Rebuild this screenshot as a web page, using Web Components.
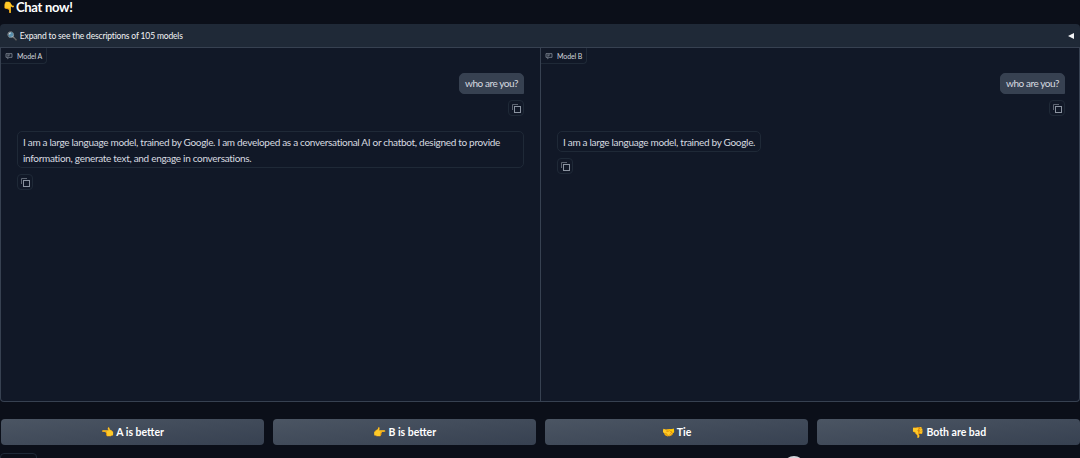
<!DOCTYPE html>
<html>
<head>
<meta charset="utf-8">
<style>
html, body { margin: 0; height: 458px; overflow: hidden; background: #0b0f19; }
body { font-family: "Lato", "Noto Sans", sans-serif; color: #f3f4f6; }
</style>
</head>
<body>
<template id="arenaPageTpl">
<style>
:host { display: flex; flex-direction: column; height: 458px; overflow: hidden; }
#title { height: 24px; font-size: 13px; font-weight: 700; line-height: 14px; letter-spacing: -.3px; display: flex; align-items: flex-start; color: #fff; }
#panels { display: flex; height: 354px; border: 1px solid #374151; border-top: 0; border-radius: 0 0 4px 4px; box-sizing: border-box; background: #111827; }
#votes { display: flex; gap: 9px; margin-top: 17px; padding-left: 1px; }
#foot { position: relative; flex: 1; }
#foot .box { position: absolute; left: 0; top: 8px; width: 37px; height: 20px; border: 1px solid #1f2937; border-radius: 4px; box-sizing: border-box; }
#foot .dot { position: absolute; left: 783px; top: 11px; width: 22px; height: 22px; border-radius: 50%; background: #d1d5db; }
</style>
<div id="title"><slot name="title"></slot></div>
<slot name="accordion"></slot>
<div id="panels"><slot name="panels"></slot></div>
<div id="votes"><slot name="votes"></slot></div>
<div id="foot"><div class="box"></div><div class="dot"></div></div>
</template>

<template id="modelAccordionTpl">
<style>
:host { display: flex; align-items: center; justify-content: space-between; height: 24px; box-sizing: border-box; background: #1f2937; border-bottom: 1px solid #374151; border-radius: 4px 4px 0 0; padding: 0 6px 0 7px; font-size: 8.5px; letter-spacing: -.16px; color: #f3f4f6; }
#arrow { width: 0; height: 0; border-top: 3.5px solid transparent; border-bottom: 3.5px solid transparent; border-right: 6px solid #f3f4f6; }
</style>
<div id="label"><slot></slot></div>
<div id="arrow"></div>
</template>

<template id="chatPanelTpl">
<style>
:host { display: block; flex: 0 0 50%; min-width: 0; position: relative; box-sizing: border-box; padding: 25px 16px 0 16px; }
:host([second]) { border-left: 1px solid #374151; padding-right: 14px; }
#badge { position: absolute; left: 0; top: 0; height: 15px; display: flex; align-items: center; gap: 4px; padding: 0 4px 0 4px; font-size: 7px; letter-spacing: -.1px; color: #d1d5db; border-right: 1px solid #1f2937; border-bottom: 1px solid #1f2937; border-radius: 0 0 4px 0; }
</style>
<div id="badge"><svg width="8" height="8" viewBox="0 0 24 24" fill="none" stroke="#9ca3af" stroke-width="2"><path d="M3 5h18v11h-9l-4 4v-4H3z"/><path d="M7 9h8M7 12h5"/></svg><span id="name"></span></div>
<slot></slot>
</template>

<template id="chatMessageTpl">
<style>
:host { display: flex; flex-direction: column; align-items: flex-start; margin-bottom: 15px; }
:host([user]) { align-items: flex-end; }
#bubble { box-sizing: border-box; font-size: 10px; letter-spacing: -.3px; line-height: 16px; color: #d8dbe0; padding: 2px 5px 1px 5px; border: 1px solid #1f2937; border-radius: 5px; max-width: 100%; }
:host([user]) #bubble { background: #374151; border-color: #374151; border-radius: 5px 5px 0 5px; padding: 1px 5px; height: 21px; letter-spacing: -.45px; }
#copy { width: 16px; height: 16px; margin-top: 6px; box-sizing: border-box; border: 1px solid #1f2937; border-radius: 4px; display: flex; align-items: center; justify-content: center; }
</style>
<div id="bubble"><slot></slot></div>
<div id="copy"><svg width="9" height="9" viewBox="0 0 9 9" fill="none"><rect x="2.5" y="2.5" width="6" height="6" stroke="#8b93a0"/><path d="M6 .5H.5V6" stroke="#5f6673"/></svg></div>
</template>

<template id="voteButtonTpl">
<style>
:host { display: block; flex: 1; height: 26px; }
button { all: unset; box-sizing: border-box; width: 100%; height: 100%; display: flex; align-items: center; justify-content: center; gap: 2px; border-radius: 4px; background: linear-gradient(to bottom right, #4b5563, #374151); font-family: "Lato", "Noto Sans", sans-serif; font-size: 10.5px; font-weight: 700; color: #fff; }
</style>
<button><slot></slot></button>
</template>

<arena-page>
  <span slot="title" style="display:contents"><span style="width:16px;box-sizing:border-box;padding-left:2px;font-size:11px;letter-spacing:0">👇</span>Chat now!</span>
  <model-accordion slot="accordion">🔍 Expand to see the descriptions of 105 models</model-accordion>
  <chat-panel slot="panels" name="Model A">
    <chat-message user>who are you?</chat-message>
    <chat-message>I am a large language model, trained by Google. I am developed as a conversational AI or chatbot, designed to provide information, generate text, and engage in conversations.</chat-message>
  </chat-panel>
  <chat-panel slot="panels" name="Model B" second>
    <chat-message user>who are you?</chat-message>
    <chat-message>I am a large language model, trained by Google.</chat-message>
  </chat-panel>
  <vote-button slot="votes">👈 A is better</vote-button>
  <vote-button slot="votes">👉 B is better</vote-button>
  <vote-button slot="votes">🤝 Tie</vote-button>
  <vote-button slot="votes">👎 Both are bad</vote-button>
</arena-page>

<script>
class ArenaPage extends HTMLElement {
  constructor() {
    super();
    this.attachShadow({ mode: 'open' }).appendChild(document.getElementById('arenaPageTpl').content.cloneNode(true));
  }
}
class ModelAccordion extends HTMLElement {
  constructor() {
    super();
    this.attachShadow({ mode: 'open' }).appendChild(document.getElementById('modelAccordionTpl').content.cloneNode(true));
  }
}
class ChatPanel extends HTMLElement {
  constructor() {
    super();
    this.attachShadow({ mode: 'open' }).appendChild(document.getElementById('chatPanelTpl').content.cloneNode(true));
  }
  connectedCallback() {
    this.shadowRoot.getElementById('name').textContent = this.getAttribute('name');
  }
}
class ChatMessage extends HTMLElement {
  constructor() {
    super();
    this.attachShadow({ mode: 'open' }).appendChild(document.getElementById('chatMessageTpl').content.cloneNode(true));
  }
}
class VoteButton extends HTMLElement {
  constructor() {
    super();
    this.attachShadow({ mode: 'open' }).appendChild(document.getElementById('voteButtonTpl').content.cloneNode(true));
  }
}
customElements.define('arena-page', ArenaPage);
customElements.define('model-accordion', ModelAccordion);
customElements.define('chat-panel', ChatPanel);
customElements.define('chat-message', ChatMessage);
customElements.define('vote-button', VoteButton);
</script>
</body>
</html>
